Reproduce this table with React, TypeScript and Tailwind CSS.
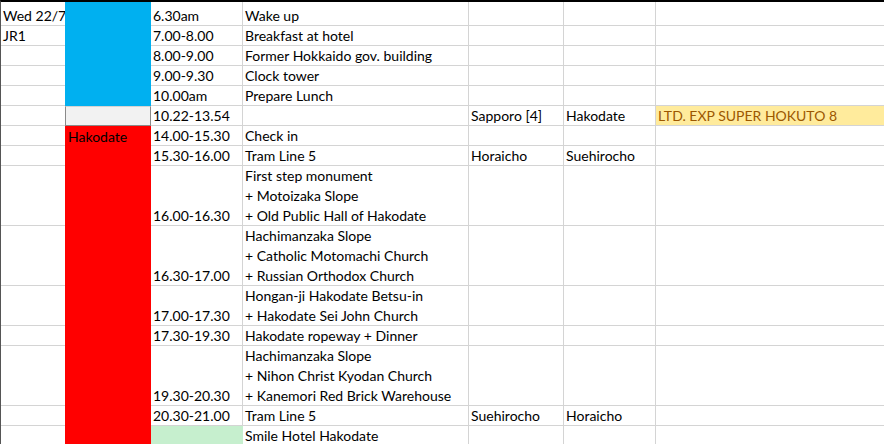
import React from "react";

type Row = {
  a?: string;
  c: string;
  d: string[];
  e?: string;
  f?: string;
  g?: string;
  green?: boolean;
};

const rows: Row[] = [
  { a: "Wed 22/7", c: "6.30am", d: ["Wake up"] },
  { a: "JR1", c: "7.00-8.00", d: ["Breakfast at hotel"] },
  { c: "8.00-9.00", d: ["Former Hokkaido gov. building"] },
  { c: "9.00-9.30", d: ["Clock tower"] },
  { c: "10.00am", d: ["Prepare Lunch"] },
  { c: "10.22-13.54", d: [], e: "Sapporo [4]", f: "Hakodate", g: "LTD. EXP SUPER HOKUTO 8" },
  { c: "14.00-15.30", d: ["Check in"] },
  { c: "15.30-16.00", d: ["Tram Line 5"], e: "Horaicho", f: "Suehirocho" },
  { c: "16.00-16.30", d: ["First step monument", "+ Motoizaka Slope", "+ Old Public Hall of Hakodate"] },
  { c: "16.30-17.00", d: ["Hachimanzaka Slope", "+ Catholic Motomachi Church", "+ Russian Orthodox Church"] },
  { c: "17.00-17.30", d: ["Hongan-ji Hakodate Betsu-in", "+ Hakodate Sei John Church"] },
  { c: "17.30-19.30", d: ["Hakodate ropeway + Dinner"] },
  { c: "19.30-20.30", d: ["Hachimanzaka Slope", "+ Nihon Christ Kyodan Church", "+ Kanemori Red Brick Warehouse"] },
  { c: "20.30-21.00", d: ["Tram Line 5"], e: "Suehirocho", f: "Horaicho" },
  { c: "", d: ["Smile Hotel Hakodate"], green: true },
];

const cell = "flex flex-col justify-end pl-[2px] border-b border-r border-[#d4d4d4] whitespace-nowrap";

function Lines({ items }: { items: string[] }) {
  if (!items.length) return null;
  return (
    <div className="-mb-px">
      {items.map((t, i) => (
        <span key={i} className="block leading-[20px]">{t}</span>
      ))}
    </div>
  );
}

export default function App() {
  return (
    <div
      className="w-[884px] h-[444px] overflow-hidden bg-white border-t-2 border-t-black border-l border-l-[#555] text-[14px] text-black"
      style={{ fontFamily: "Lato, 'Liberation Sans', sans-serif" }}
    >
      <div className="grid grid-cols-[64px_86px_92px_226px_95px_92px_1fr] grid-rows-[24px_repeat(7,20px)_60px_60px_40px_20px_60px_20px_20px]">
        {rows.map((r, i) => (
          <React.Fragment key={i}>
            <div className="flex flex-col justify-end pl-[2px] border-b border-[#d4d4d4] whitespace-nowrap">
              {r.a && <Lines items={[r.a]} />}
            </div>
            {i === 0 && <div className="row-span-5 bg-[#00b0f0]" />}
            {i === 5 && <div className="bg-[#f2f2f2] border-l border-r border-b border-[#8a8a8a] border-t border-t-[#d4d4d4]" />}
            {i === 6 && (
              <div className="row-span-9 bg-[#ff0000] pl-[3px] pt-[1px]">
                <span className="block leading-[20px]">Hakodate</span>
              </div>
            )}
            <div className={r.green ? "bg-[#c6efce] border-b border-[#d4d4d4]" : cell}>
              {r.c && <Lines items={[r.c]} />}
            </div>
            <div className={cell}>
              <Lines items={r.d} />
            </div>
            <div className={cell}>
              {r.e && <Lines items={[r.e]} />}
            </div>
            <div className={cell}>
              {r.f && <Lines items={[r.f]} />}
            </div>
            {r.g ? (
              <div className="flex flex-col justify-end pl-[2px] bg-[#ffeb9c] text-[#9c5700] border-b border-[#d4d4d4] whitespace-nowrap">
                <Lines items={[r.g]} />
              </div>
            ) : (
              <div className="border-b border-[#d4d4d4]" />
            )}
          </React.Fragment>
        ))}
      </div>
    </div>
  );
}
